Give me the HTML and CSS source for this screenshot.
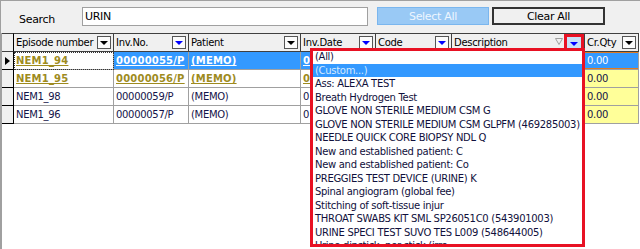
FILE: index.html
```html
<!DOCTYPE html>
<html lang="en">
<head>
<meta charset="UTF-8" />
<title>Invoice Filter</title>
<link rel="stylesheet" href="styles.css">
</head>
<body>

<div class="toolbar">
  <label class="search-label" for="searchInput">Search</label>
  <input type="text" id="searchInput" class="search-input" value="URIN" />
  <button class="btn btn-select">Select All</button>
  <button class="btn btn-clear">Clear All</button>
</div>

<div class="grid">
  <div class="row head">
    <div class="cell ind"></div>
    <div class="cell"><span class="htext">Episode number</span><span class="dd"><i class="tri"></i></span></div>
    <div class="cell"><span class="htext">Inv.No.</span><span class="dd"><i class="tri blue"></i></span></div>
    <div class="cell"><span class="htext">Patient</span><span class="dd"><i class="tri"></i></span></div>
    <div class="cell"><span class="htext">Inv.Date</span><span class="dd"><i class="tri blue"></i></span></div>
    <div class="cell"><span class="htext">Code</span><span class="dd"><i class="tri blue"></i></span></div>
    <div class="cell">
      <span class="htext">Description</span>
      <svg class="funnel" width="8" height="7" viewBox="0 0 8 7"><path d="M0.5 0.5 H7.5 L4 6.5 Z" fill="none" stroke="#a0a0a0" stroke-width="1"/></svg>
      <span class="dd dd-focus"><i class="tri blue"></i></span>
    </div>
    <div class="cell"><span class="htext">Cr.Qty</span><span class="dd"><i class="tri"></i></span></div>
  </div>

  <div class="row sel">
    <div class="cell ind"><i class="pointer"></i></div>
    <div class="cell focus olive"><span>NEM1_94</span></div>
    <div class="cell blue-cell bold"><span>00000055/P</span></div>
    <div class="cell blue-cell bold"><span>(MEMO)</span></div>
    <div class="cell blue-cell bold"><span>0</span></div>
    <div class="cell blue-cell"></div>
    <div class="cell blue-cell"></div>
    <div class="cell qty qty-sel"><span>0.00</span></div>
  </div>

  <div class="row">
    <div class="cell ind"></div>
    <div class="cell olive"><span>NEM1_95</span></div>
    <div class="cell olive"><span>00000056/P</span></div>
    <div class="cell olive"><span>(MEMO)</span></div>
    <div class="cell olive"><span>0</span></div>
    <div class="cell"></div>
    <div class="cell"></div>
    <div class="cell qty"><span>0.00</span></div>
  </div>

  <div class="row">
    <div class="cell ind"></div>
    <div class="cell"><span>NEM1_98</span></div>
    <div class="cell"><span>00000059/P</span></div>
    <div class="cell"><span>(MEMO)</span></div>
    <div class="cell"><span>0</span></div>
    <div class="cell"></div>
    <div class="cell"></div>
    <div class="cell qty"><span>0.00</span></div>
  </div>

  <div class="row">
    <div class="cell ind"></div>
    <div class="cell"><span>NEM1_96</span></div>
    <div class="cell"><span>00000057/P</span></div>
    <div class="cell"><span>(MEMO)</span></div>
    <div class="cell"><span>0</span></div>
    <div class="cell"></div>
    <div class="cell"></div>
    <div class="cell qty"><span>0.00</span></div>
  </div>
</div>

<!-- filter dropdown for the Description column -->
<div class="filter-popup">
  <ul class="filter-list">
    <li>(All)</li>
    <li class="active">(Custom...)</li>
    <li>Ass: ALEXA TEST</li>
    <li>Breath Hydrogen Test</li>
    <li>GLOVE NON STERILE MEDIUM CSM G</li>
    <li>GLOVE NON STERILE MEDIUM CSM GLPFM (469285003)</li>
    <li>NEEDLE QUICK CORE BIOPSY NDL Q</li>
    <li>New and established patient: C</li>
    <li>New and established patient: Co</li>
    <li>PREGGIES TEST DEVICE (URINE) K</li>
    <li>Spinal angiogram (global fee)</li>
    <li>Stitching of soft-tissue injur</li>
    <li>THROAT SWABS KIT SML SP26051C0 (543901003)</li>
    <li>URINE SPECI TEST SUVO TES L009 (548644005)</li>
    <li>Urine dipstick, per stick (irre</li>
  </ul>
</div>

</body>
</html>
```

FILE: styles.css
```css
body {
  margin: 0;
  width: 640px;
  height: 249px;
  overflow: hidden;
  background: #fff;
  font-family: "DejaVu Sans", sans-serif;
  font-size: 10px;
  letter-spacing: -0.3px;
  color: #000;
}

/* Top search bar */
.toolbar {
  height: 33px;
  box-sizing: border-box;
  border-top: 1px solid #a0a0a0;
  border-left: 1px solid #a0a0a0;
  background: #f0f0f0;
  display: flex;
  align-items: flex-start;
  padding-top: 6px;
}

.search-label {
  margin-left: 18px;
  width: 63px;
  margin-top: 3px;
  line-height: 19px;
  font-size: 11px;
}

.search-input {
  width: 286px;
  height: 19px;
  box-sizing: border-box;
  border: 1px solid #a0a0a0;
  background: #fff;
  padding: 0 2px;
  margin: 0;
  font-family: inherit;
  font-size: 11px;
  letter-spacing: -0.3px;
  outline: none;
}

.btn {
  height: 18px;
  box-sizing: border-box;
  margin: 0;
  padding: 0;
  font-family: inherit;
  font-size: 11px;
  letter-spacing: -0.3px;
}

.btn-select {
  width: 112px;
  margin-left: 9px;
  background: #99c9f5;
  border: 1px solid #7ab6ee;
  color: #eef6ff;
}

.btn-clear {
  width: 113px;
  margin-left: 3px;
  background: #f0f0f0;
  border: 2px solid #333;
  color: #000;
}

/* Grid */
.grid {
  border-left: 2px solid #a0a0a0;
  height: 216px;
}

.row {
  display: grid;
  grid-template-columns: 12px 100px 75px 112px 75px 76px 133px 54px;
  height: 18px;
}

.cell {
  box-sizing: border-box;
  border-right: 1px solid #a0a0a0;
  border-bottom: 1px solid #a0a0a0;
  display: flex;
  align-items: center;
  padding-left: 2px;
  overflow: hidden;
  white-space: nowrap;
  color: #14144a;
}

.cell.ind {
  background: #f0f0f0;
  border-color: #000;
  padding-left: 2px;
}

.head {
  height: 19px;
}

.head .cell {
  background: #f0f0f0;
  border-top: 1px solid #404040;
  border-bottom: 1px solid #404040;
  border-right-color: #404040;
  color: #000;
  overflow: visible;
}

.head .cell.ind {
  border-right-color: #000;
}

.htext {
  flex: 1;
}

.dd {
  width: 14px;
  height: 13px;
  box-sizing: border-box;
  border: 1px solid #555;
  background: #fbfbfb;
  margin-right: 2px;
  display: flex;
  align-items: center;
  justify-content: center;
}

.tri {
  width: 0;
  height: 0;
  border-left: 4px solid transparent;
  border-right: 4px solid transparent;
  border-top: 4px solid #000;
  margin-top: 1px;
}

.tri.blue {
  border-top-color: #0000ff;
}

.funnel {
  margin-right: 1px;
  margin-top: -2px;
}

.dd-focus {
  width: 20px;
  height: 18px;
  margin-right: 0;
  margin-bottom: -1px;
  border: 3px solid #e81123;
  background: #c8e0f6;
}

.pointer {
  width: 0;
  height: 0;
  border-top: 4px solid transparent;
  border-bottom: 4px solid transparent;
  border-left: 5px solid #000;
  margin-left: 1px;
}

.olive {
  color: #9e8b1e;
  font-weight: bold;
  text-decoration: underline;
  letter-spacing: 0.2px;
}

.bold {
  font-weight: bold;
  text-decoration: underline;
  letter-spacing: 0.2px;
}

.blue-cell {
  background: #3399ff;
  color: #fff;
}

.focus {
  outline: 1px dotted #333;
  outline-offset: -1px;
}

.qty {
  background: #ffff99;
  color: #14144a;
}

.qty-sel {
  background: #3399ff;
  color: #fff;
  box-shadow: inset 0 -1px 0 #e07a20, inset 0 1px 0 #e07a20;
}

/* Filter popup */
.filter-popup {
  position: absolute;
  left: 310px;
  top: 48px;
  width: 275px;
  height: 199px;
  box-sizing: border-box;
  border: 3px solid #e81123;
  background: #fff;
  overflow: hidden;
}

.filter-list {
  list-style: none;
  margin: -1px 0 0;
  padding: 0;
}

.filter-list li {
  height: 13.5px;
  line-height: 13.5px;
  padding-left: 2px;
  white-space: nowrap;
  color: #10103c;
}

.filter-list li.active {
  background: #3399ff;
  color: #d4eaff;
}
```
